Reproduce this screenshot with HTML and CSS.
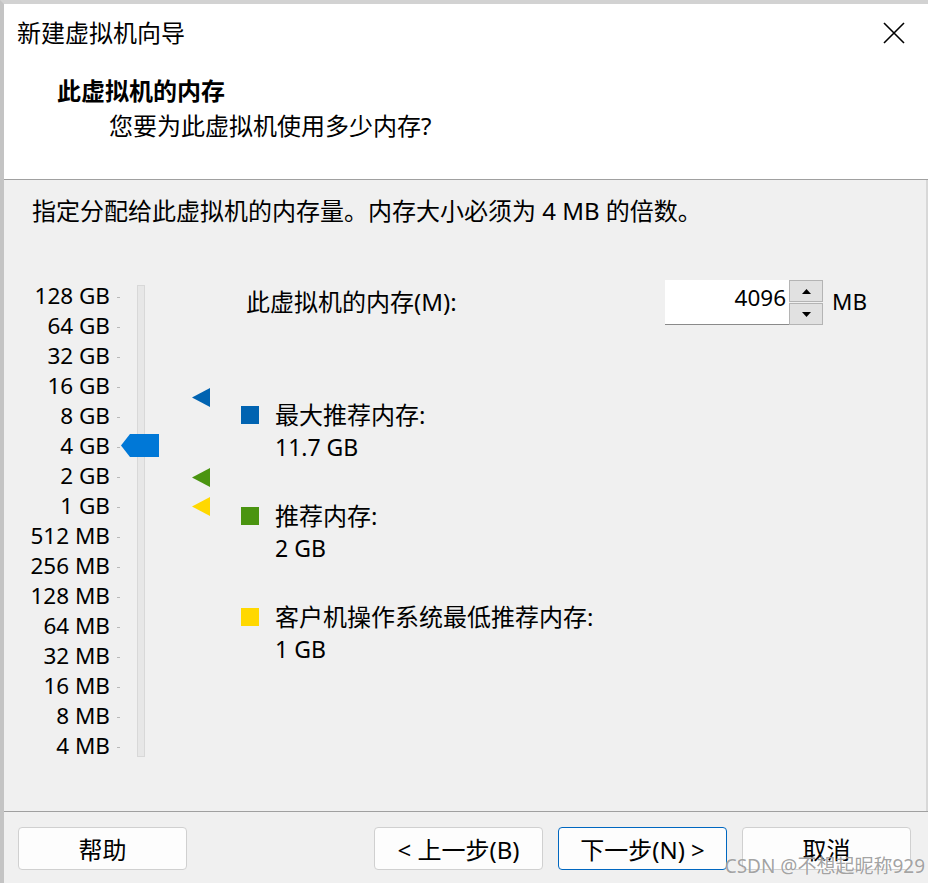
FILE: index.html
```html
<!DOCTYPE html>
<html lang="zh-CN">
<head>
<meta charset="utf-8">
<title>新建虚拟机向导</title>
<link rel="stylesheet" href="styles.css">
</head>
<body>
<div class="window">
  <header class="header">
    <div class="titlebar">
      <span class="title">新建虚拟机向导</span>
      <svg class="close" width="22" height="22" viewBox="0 0 22 22" aria-label="关闭">
        <path d="M1 1 L21 21 M21 1 L1 21" stroke="#000" stroke-width="1.6" fill="none"/>
      </svg>
    </div>
    <h1 class="heading">此虚拟机的内存</h1>
    <p class="subheading">您要为此虚拟机使用多少内存?</p>
  </header>

  <main class="content">
    <p class="hint">指定分配给此虚拟机的内存量。内存大小必须为 4 MB 的倍数。</p>
    <div class="panel">
      <div class="slider">
        <ul class="scale">
          <li class="row"><span class="lbl">128 GB</span><span class="tick"></span></li>
          <li class="row"><span class="lbl">64 GB</span><span class="tick"></span></li>
          <li class="row"><span class="lbl">32 GB</span><span class="tick"></span></li>
          <li class="row"><span class="lbl">16 GB</span><span class="tick"></span></li>
          <li class="row"><span class="lbl">8 GB</span><span class="tick"></span></li>
          <li class="row"><span class="lbl">4 GB</span><span class="tick"></span></li>
          <li class="row"><span class="lbl">2 GB</span><span class="tick"></span></li>
          <li class="row"><span class="lbl">1 GB</span><span class="tick"></span></li>
          <li class="row"><span class="lbl">512 MB</span><span class="tick"></span></li>
          <li class="row"><span class="lbl">256 MB</span><span class="tick"></span></li>
          <li class="row"><span class="lbl">128 MB</span><span class="tick"></span></li>
          <li class="row"><span class="lbl">64 MB</span><span class="tick"></span></li>
          <li class="row"><span class="lbl">32 MB</span><span class="tick"></span></li>
          <li class="row"><span class="lbl">16 MB</span><span class="tick"></span></li>
          <li class="row"><span class="lbl">8 MB</span><span class="tick"></span></li>
          <li class="row"><span class="lbl">4 MB</span><span class="tick"></span></li>
        </ul>
        <div class="track"></div>
        <svg class="thumb" width="38" height="23" viewBox="0 0 38 23">
          <polygon points="0,11.5 9,0 38,0 38,23 9,23" fill="#0078d7"/>
        </svg>
        <svg class="mark mark-max" width="18" height="19" viewBox="0 0 18 19">
          <polygon points="0,9.5 18,0 18,19" fill="#0063b1"/>
        </svg>
        <svg class="mark mark-rec" width="18" height="19" viewBox="0 0 18 19">
          <polygon points="0,9.5 18,0 18,19" fill="#4a9410"/>
        </svg>
        <svg class="mark mark-min" width="18" height="19" viewBox="0 0 18 19">
          <polygon points="0,9.5 18,0 18,19" fill="#ffd800"/>
        </svg>
      </div>

      <div class="details">
        <div class="mem-row">
          <span class="mem-label">此虚拟机的内存(M):</span>
          <div class="spin">
            <div class="spin-input">4096</div>
            <div class="spin-btns">
              <div class="spin-btn">
                <svg width="9" height="5" viewBox="0 0 9 5"><polygon points="4.5,0 9,5 0,5" fill="#000"/></svg>
              </div>
              <div class="spin-btn">
                <svg width="9" height="5" viewBox="0 0 9 5"><polygon points="0,0 9,0 4.5,5" fill="#000"/></svg>
              </div>
            </div>
          </div>
          <span class="unit">MB</span>
        </div>

        <ul class="legend">
          <li class="legend-item">
            <span class="swatch swatch-max"></span>
            <div class="legend-text">
              <div class="legend-title">最大推荐内存:</div>
              <div class="legend-value">11.7 GB</div>
            </div>
          </li>
          <li class="legend-item">
            <span class="swatch swatch-rec"></span>
            <div class="legend-text">
              <div class="legend-title">推荐内存:</div>
              <div class="legend-value">2 GB</div>
            </div>
          </li>
          <li class="legend-item">
            <span class="swatch swatch-min"></span>
            <div class="legend-text">
              <div class="legend-title">客户机操作系统最低推荐内存:</div>
              <div class="legend-value">1 GB</div>
            </div>
          </li>
        </ul>
      </div>
    </div>
  </main>

  <footer class="footer">
    <div class="btn">帮助</div>
    <div class="btn btn-back">&lt; 上一步(B)</div>
    <div class="btn btn-primary">下一步(N) &gt;</div>
    <div class="btn">取消</div>
    <span class="watermark">CSDN @不想起昵称929</span>
  </footer>
</div>
</body>
</html>
```

FILE: styles.css
```css
* {
  box-sizing: border-box;
}

html, body {
  margin: 0;
  padding: 0;
}

body {
  width: 928px;
  height: 883px;
  overflow: hidden;
  background: #d0d0d0;
  font-family: "Noto Sans", "Noto Sans CJK SC", sans-serif;
  font-size: 24px;
  color: #000;
}

.window {
  width: 928px;
  height: 883px;
  border-top: 4px solid #d2d2d2;
  border-left: 4px solid #c4c4c4;
  display: flex;
  flex-direction: column;
  background: #f0f0f0;
  position: relative;
}

/* ---------- header ---------- */
.header {
  height: 176px;
  background: #fff;
  border-bottom: 1px solid #a0a0a0;
  flex: none;
}

.titlebar {
  display: flex;
  justify-content: space-between;
  align-items: center;
  padding: 14px 23px 0 13px;
  height: 44px;
}

.title {
  font-size: 24px;
  line-height: 30px;
  font-weight: 400;
}

.close {
  display: block;
}

.heading {
  margin: 27px 0 0 0;
  padding-left: 53px;
  font-size: 24px;
  line-height: 32px;
  font-weight: 700;
}

.subheading {
  margin: 3px 0 0 0;
  padding-left: 105px;
  font-size: 24px;
  line-height: 32px;
}

/* ---------- content ---------- */
.content {
  flex: 1;
  display: flex;
  flex-direction: column;
  border-right: 2px solid #d8d8d8;
}

.hint {
  margin: 15px 0 0 0;
  padding-left: 28px;
  line-height: 32px;
  font-size: 24px;
}

.panel {
  display: flex;
  margin-top: 53px;
}

.slider {
  position: relative;
  width: 237px;
  flex: none;
}

.scale {
  list-style: none;
  margin: 0;
  padding: 1px 0 0 0;
}

.row {
  display: flex;
  align-items: center;
  height: 30px;
}

.lbl {
  width: 106px;
  text-align: right;
  font-size: 22.5px;
  line-height: 30px;
}

.tick {
  width: 3px;
  height: 1px;
  margin-left: 7px;
  background: #b8b8b8;
  margin-top: 2px;
}

.track {
  position: absolute;
  left: 133px;
  top: 5px;
  width: 8px;
  height: 472px;
  background: #e7e7e7;
  border: 1px solid #d8d8d8;
}

.thumb {
  position: absolute;
  left: 117px;
  top: 154px;
}

.mark {
  position: absolute;
  left: 188px;
}

.mark-max { top: 108px; }
.mark-rec { top: 188px; }
.mark-min { top: 217px; }

/* ---------- details ---------- */
.details {
  flex: 1;
}

.mem-row {
  display: flex;
  align-items: center;
  height: 45px;
}

.mem-label {
  width: 424px;
  padding-left: 5px;
  font-size: 24px;
  line-height: 32px;
  margin-top: -2px;
}

.spin {
  display: flex;
  height: 45px;
}

.spin-input {
  width: 124px;
  height: 45px;
  background: #fff;
  border-bottom: 1px solid #8a8a8a;
  text-align: right;
  padding-right: 3px;
  font-size: 22.5px;
  line-height: 36px;
}

.spin-btns {
  width: 34px;
  display: flex;
  flex-direction: column;
  gap: 1px;
}

.spin-btn {
  flex: 1;
  background: #e1e1e1;
  border: 1px solid #b4b4b4;
  display: flex;
  align-items: center;
  justify-content: center;
}

.spin-btn svg {
  display: block;
}

.unit {
  margin-left: 9px;
  font-size: 22.5px;
  line-height: 30px;
  margin-top: -2px;
}

.legend {
  list-style: none;
  margin: 74px 0 0 0;
  padding: 0;
  display: flex;
  flex-direction: column;
  gap: 37px;
}

.legend-item {
  display: flex;
  align-items: flex-start;
}

.swatch {
  width: 18px;
  height: 18px;
  margin-top: 7px;
  margin-right: 16px;
  flex: none;
}

.swatch-max { background: #0063b1; }
.swatch-rec { background: #4a9410; }
.swatch-min { background: #ffd800; }

.legend-title {
  line-height: 32px;
  font-size: 24px;
}

.legend-value {
  line-height: 32px;
  font-size: 23px;
}

/* ---------- footer ---------- */
.footer {
  flex: none;
  height: 72px;
  border-top: 1px solid #a0a0a0;
  display: flex;
  align-items: flex-start;
  padding: 15px 17px 0 14px;
  gap: 15px;
  position: relative;
}

.btn {
  width: 169px;
  height: 43px;
  background: #fdfdfd;
  border: 1px solid #d0d0d0;
  border-radius: 4px;
  display: flex;
  align-items: center;
  justify-content: center;
  font-size: 24px;
}

.btn-back {
  margin-left: auto;
}

.btn-primary {
  border-color: #0067c0;
}

.watermark {
  position: absolute;
  right: 3px;
  bottom: 4px;
  font-size: 19px;
  color: rgba(110, 110, 110, 0.65);
  text-shadow: 0 0 1px #fff;
  white-space: nowrap;
}
```
